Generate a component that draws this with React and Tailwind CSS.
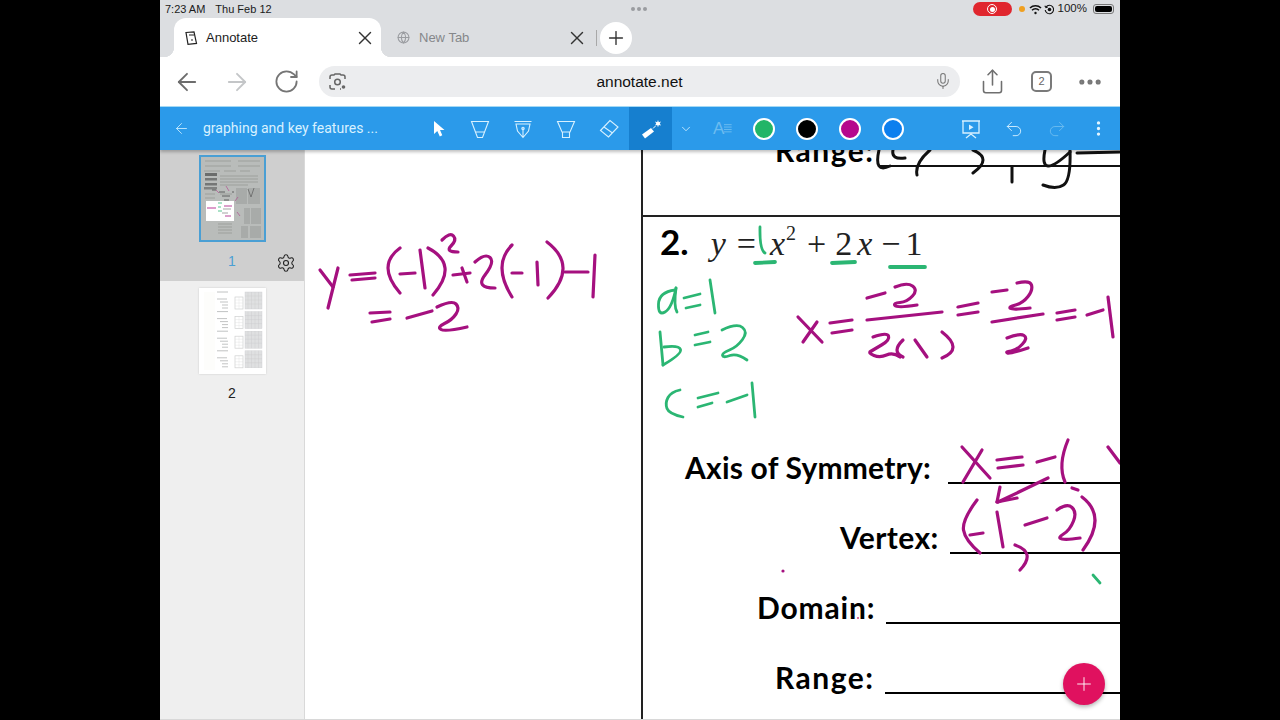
import React from "react";
import { ArrowLeft, ArrowRight, RotateCw, X, Plus, Globe, Mic, Share, MoreHorizontal, MoreVertical, ChevronDown, Settings, Undo2, Redo2 } from "lucide-react";

const M = "#a5107f";
const G = "#2bb673";

// smooth pen stroke through a list of [x, y] points
function smooth(p) {
  if (p.length < 3) return `M${p[0][0]} ${p[0][1]}L${p[1][0]} ${p[1][1]}`;
  if (p.length === 3) {
    const cx = 2 * p[1][0] - (p[0][0] + p[2][0]) / 2;
    const cy = 2 * p[1][1] - (p[0][1] + p[2][1]) / 2;
    return `M${p[0][0]} ${p[0][1]}Q${cx} ${cy} ${p[2][0]} ${p[2][1]}`;
  }
  let d = `M${p[0][0]} ${p[0][1]}`;
  for (let i = 1; i < p.length - 1; i++) {
    const mx = (p[i][0] + p[i + 1][0]) / 2;
    const my = (p[i][1] + p[i + 1][1]) / 2;
    d += `Q${p[i][0]} ${p[i][1]} ${i === p.length - 2 ? p[i + 1][0] : mx} ${i === p.length - 2 ? p[i + 1][1] : my}`;
  }
  return d;
}

function Ink({ color, w, strokes }) {
  return (
    <g fill="none" stroke={color} strokeWidth={w} strokeLinecap="round" strokeLinejoin="round">
      {strokes.map((s, i) => (
        <path key={i} d={smooth(s)} />
      ))}
    </g>
  );
}

const leftInk = [
  [[320, 270], [333, 287]],
  [[338, 268], [333, 288], [328, 308]],
  [[350, 275], [375, 273]],
  [[352, 280], [375, 278]],
  [[400, 248], [388, 268], [400, 293]],
  [[400, 274], [415, 273]],
  [[420, 250], [425, 288]],
  [[428, 248], [445, 268], [433, 295]],
  [[442, 240], [450, 232], [457, 240], [445, 252], [458, 252]],
  [[453, 275], [470, 273]],
  [[462, 268], [467, 282]],
  [[475, 262], [485, 253], [495, 262], [475, 288], [495, 288]],
  [[512, 245], [502, 268], [512, 297]],
  [[512, 273], [522, 273]],
  [[537, 262], [538, 285]],
  [[547, 242], [563, 268], [548, 298]],
  [[565, 272], [588, 272]],
  [[595, 255], [593, 297]],
  [[370, 313], [390, 312]],
  [[372, 322], [390, 319]],
  [[407, 318], [432, 311]],
  [[437, 307], [452, 300], [460, 308], [452, 320], [437, 327], [445, 332], [467, 327]],
];

const blackInk = [
  [[879, 150], [879, 166], [890, 166]],
  [[893, 150], [895, 157], [905, 158]],
  [[930, 150], [919, 163], [917, 175]],
  [[973, 150], [983, 160], [973, 173]],
  [[1012, 167], [1012, 182]],
  [[1045, 150], [1048, 166], [1070, 152]],
  [[1070, 150], [1071, 180], [1056, 190], [1043, 185]],
  [[1077, 153], [1120, 152]],
];

const greenThick = [
  [[755, 263], [775, 262]],
  [[832, 263], [855, 262]],
  [[890, 267], [925, 267]],
];

const greenInk = [
  [[760, 227], [761, 245], [765, 253]],
  [[675, 290], [659, 292], [658, 316], [672, 308], [676, 288]],
  [[676, 288], [675, 303], [677, 312]],
  [[684, 298], [700, 294]],
  [[686, 308], [700, 305]],
  [[710, 280], [715, 313]],
  [[660, 332], [663, 365]],
  [[663, 365], [682, 354], [679, 345], [664, 347]],
  [[695, 335], [708, 332]],
  [[695, 345], [710, 342]],
  [[722, 330], [737, 323], [748, 332], [737, 347], [722, 353], [723, 358], [737, 353], [747, 360]],
  [[680, 390], [671, 392], [665, 403], [669, 414], [683, 417]],
  [[698, 398], [718, 393]],
  [[698, 407], [712, 403]],
  [[727, 402], [747, 395]],
  [[752, 383], [755, 417]],
  [[1093, 575], [1100, 583]],
];

const magentaInk = [
  [[798, 317], [822, 342]],
  [[817, 322], [803, 342]],
  [[830, 323], [852, 320]],
  [[832, 333], [852, 330]],
  [[867, 298], [885, 293]],
  [[895, 287], [907, 282], [918, 290], [907, 302], [893, 303], [897, 308], [917, 305]],
  [[867, 320], [942, 312]],
  [[873, 337], [887, 332], [890, 340], [873, 350], [868, 353], [880, 358], [893, 352], [900, 357]],
  [[903, 340], [897, 350], [903, 357]],
  [[915, 340], [927, 357]],
  [[942, 332], [953, 347], [942, 358]],
  [[958, 307], [978, 303]],
  [[958, 315], [978, 312]],
  [[992, 292], [1007, 290]],
  [[1017, 283], [1030, 280], [1033, 290], [1023, 303], [1008, 307], [1013, 310], [1030, 308]],
  [[992, 322], [1043, 314]],
  [[1007, 338], [1020, 333], [1028, 338], [1017, 350], [1005, 352], [1010, 354], [1028, 348]],
  [[1057, 313], [1075, 310]],
  [[1057, 320], [1075, 317]],
  [[1087, 315], [1103, 310]],
  [[1108, 297], [1113, 337]],
  [[962, 447], [990, 478]],
  [[982, 450], [963, 482]],
  [[997, 460], [1022, 457]],
  [[998, 468], [1023, 465]],
  [[1037, 462], [1055, 457]],
  [[1068, 440], [1062, 463], [1065, 482]],
  [[1108, 447], [1120, 463]],
  [[1048, 478], [998, 502]],
  [[1000, 487], [997, 502]],
  [[997, 502], [1017, 498]],
  [[1072, 488], [1078, 490]],
  [[977, 500], [962, 520], [965, 540], [980, 553]],
  [[970, 535], [983, 533]],
  [[997, 512], [1003, 547]],
  [[1025, 525], [1047, 518]],
  [[1057, 510], [1067, 503], [1077, 512], [1070, 530], [1057, 538], [1067, 540], [1080, 538]],
  [[1082, 497], [1095, 520], [1083, 550]],
  [[1015, 545], [1027, 555], [1020, 570]],
];

function Swatch({ c }) {
  return <div className={"w-[22px] h-[22px] rounded-full border-2 border-white " + c} />;
}

function PenIcon({ children }) {
  return (
    <svg width="20" height="20" viewBox="0 0 20 20" fill="none" stroke="#d8f1ff" strokeWidth="1.1">
      {children}
    </svg>
  );
}

function Label({ text, rowClass, textClass, lineClass }) {
  return (
    <div className={"flex items-end font-bold text-[30px] leading-none text-black " + rowClass}>
      <span className={"whitespace-nowrap " + textClass}>{text}</span>
      <div className={"h-[2px] bg-black flex-1 min-w-[400px] " + lineClass} />
    </div>
  );
}

function Thumb1() {
  return (
    <div className="relative w-[67px] h-[87px] border-2 border-[#4a9fd4] bg-[#b9bcba] overflow-hidden">
      <svg width="63" height="83" viewBox="1 1 63 83">
        <g stroke="#8b8d8c" strokeWidth=".6" fill="none">
          <path d="M5 5h26M38 5h22M5 10h26M38 10h22M4 15h16M24 15h12M40 15h10" />
          <path d="M20 20h38M20 23h38M20 26h38M20 29h28" />
          <path d="M18 68h14M18 71h14M18 74h14M18 77h14" />
          <path d="M5 38h10M20 38h12M5 42h10" />
        </g>
        <rect x="5" y="17" width="12" height="3" fill="#6b6d6c" />
        <rect x="5" y="22" width="12" height="2.500" fill="#757776" />
        <rect x="5" y="27" width="12" height="2.500" fill="#757776" />
        <rect x="4" y="31" width="13" height="2.500" fill="#808281" />
        <g fill="#a8aba9">
          <rect x="36" y="32" width="11" height="16" />
          <rect x="48" y="32" width="12" height="16" />
          <rect x="44" y="52" width="6" height="16" />
          <rect x="51" y="52" width="10" height="16" />
          <rect x="41" y="70" width="7" height="12" />
          <rect x="50" y="70" width="11" height="12" />
        </g>
        <rect x="6" y="45" width="28" height="20" fill="#fff" />
        <path d="M7 52h9" stroke="#c75aa9" strokeWidth="1.200" />
        <path d="M18 47h4M18 51h3M18 55h4" stroke={G} strokeWidth=".8" />
        <path d="M24 50h8M25 60h6" stroke={M} strokeWidth=".8" />
        <path d="M23 53h8M22 57h6" stroke="#666" strokeWidth=".6" />
        <path d="M16 34l3 3M26 30l3 5M35 45l3-4M37 56l3 4" stroke="#b0508f" strokeWidth=".7" fill="none" />
        <path d="M48 33l3 8 3-9" stroke="#666" strokeWidth=".8" fill="none" />
        <path d="M12 34h4M19 36h6M22 40h8M24 44h5M32 36h2" stroke="#555" strokeWidth=".9" />
      </svg>
    </div>
  );
}

function Thumb2() {
  const rows = [0, 1, 2, 3];
  return (
    <div className="w-[67px] h-[86px] bg-white shadow-[0_0_2px_rgba(0,0,0,0.15)] overflow-hidden">
      <svg width="67" height="86" viewBox="0 0 67 86">
        <rect x="5" y="4" width="11" height="78" fill="#fdfdfb" />
        {rows.map((i) => (
          <g key={i} transform={`translate(0 ${i * 19.6})`}>
            <path d="M18 4h11" stroke="#b0b2b2" strokeWidth=".8" />
            <path d="M18 11h10M21 14h8M23 17h6M23 20h6" stroke="#a8aaaa" strokeWidth=".7" />
            <rect x="36" y="9" width="8" height="12" fill="none" stroke="#cfd0d0" strokeWidth=".7" />
            <path d="M40 9v12M36 12h8M36 15h8M36 18h8" stroke="#dedfdf" strokeWidth=".4" />
            <rect x="46" y="4" width="17" height="17" fill="#dfe0e1" stroke="#ccced0" strokeWidth=".4" />
            <path d="M49 4v17M52.500 4v17M56 4v17M59.500 4v17M46 8h17M46 12h17M46 16h17" stroke="#c9cacc" strokeWidth=".4" />
          </g>
        ))}
      </svg>
    </div>
  );
}

export default function App() {
  return (
    <div className="w-[1280px] h-[720px] bg-black flex justify-center overflow-hidden" style={{ fontFamily: '"Liberation Sans",sans-serif' }}>
      <div className="w-[960px] h-[720px] flex flex-col bg-white overflow-hidden">
        {/* status + tabs */}
        <div className="h-[57px] bg-[#dcdee1] flex flex-col shrink-0">
          <div className="h-[18px] relative flex items-center pl-[5px] pr-[6px] text-[11px] text-[#1a1a1a]">
            <span className="mr-[10px]">7:23 AM</span>
            <span>Thu Feb 12</span>
            <div className="absolute left-[471px] top-[7px] flex gap-[2px]">
              <i className="w-[4px] h-[4px] rounded-full bg-[#9a9ca0]" />
              <i className="w-[4px] h-[4px] rounded-full bg-[#9a9ca0]" />
              <i className="w-[4px] h-[4px] rounded-full bg-[#9a9ca0]" />
            </div>
            <div className="flex-1" />
            <div className="w-[39px] h-[14px] rounded-full bg-[#e0262e] flex items-center justify-center">
              <div className="w-[10px] h-[10px] rounded-full border border-white flex items-center justify-center">
                <div className="w-[5px] h-[5px] rounded-full bg-white" />
              </div>
            </div>
            <i className="ml-[7px] w-[6px] h-[6px] rounded-full bg-[#f0a020]" />
            <svg className="ml-[4px]" width="13" height="11" viewBox="0 0 13 11" fill="none" stroke="#111" strokeWidth="1.6">
              <path d="M1 4a8 8 0 0 1 11 0M3 6.300a5 5 0 0 1 7 0" />
              <circle cx="6.500" cy="9" r="1.200" fill="#111" stroke="none" />
            </svg>
            <svg className="ml-[2px]" width="11" height="11" viewBox="0 0 11 11" fill="none" stroke="#111" strokeWidth="1.100">
              <path d="M2 3a4.200 4.200 0 1 1-.8 3" />
              <path d="M.8 1.800 2 3.600l1.800-.6" />
              <circle cx="5.500" cy="5.500" r="1.800" fill="#111" stroke="none" />
            </svg>
            <span className="ml-[3px] text-[11.5px]">100%</span>
            <div className="ml-[6px] w-[21px] h-[10px] rounded-[3px] border border-[#777] p-[1px]">
              <div className="w-full h-full rounded-[2px] bg-black" />
            </div>
          </div>
          <div className="h-[39px] flex items-stretch pl-[14px]">
            <div className="relative w-[207px] bg-white rounded-t-[12px] flex items-center pl-[10px] pr-[5px] text-[13px] text-[#1c1c1c]">
              <div className="absolute left-[-10px] bottom-0 w-[10px] h-[10px] bg-[radial-gradient(circle_at_0_0,#dcdee1_10px,#fff_10.500px)]" />
              <div className="absolute right-[-10px] bottom-0 w-[10px] h-[10px] bg-[radial-gradient(circle_at_100%_0,#dcdee1_10px,#fff_10.500px)]" />
              <svg width="14" height="14" viewBox="0 0 14 14" fill="none" stroke="#222" strokeWidth="1.200">
                <path d="M2 1.500 10 .8l2.500 11.600-8.500.9z" />
                <path d="M5 4h5M7 9h2" />
              </svg>
              <span className="ml-[8px] flex-1">Annotate</span>
              <X size={22} strokeWidth={1.500} color="#333" />
            </div>
            <div className="w-[207px] flex items-center pl-[16px] text-[13px] text-[#85878a]">
              <Globe size={13} color="#9a9ca0" />
              <span className="ml-[9px] flex-1">New Tab</span>
              <X size={22} strokeWidth={1.500} color="#333" />
            </div>
            <div className="w-px h-[16px] bg-[#a8a8a8] self-center ml-[8px]" />
            <div className="ml-[3px] w-[32px] h-[32px] self-center rounded-full bg-white flex items-center justify-center">
              <Plus size={22} strokeWidth={1.500} color="#333" />
            </div>
          </div>
        </div>
        {/* address bar */}
        <div className="h-[50px] bg-white flex items-center shrink-0 pl-[13px] border-b border-[#a6dcf7]">
          <ArrowLeft size={28} strokeWidth={1.600} color="#6d6d6d" />
          <ArrowRight size={28} strokeWidth={1.600} color="#c4c6c8" className="ml-[22px]" />
          <RotateCw size={27} strokeWidth={1.600} color="#757575" className="ml-[22px]" />
          <div className="ml-[19px] w-[641px] h-[31px] rounded-full bg-[#ecedef] relative flex items-center justify-center text-[15.500px] text-[#111]">
            <svg className="absolute left-[10px] top-[7px]" width="18" height="18" viewBox="0 0 18 18" fill="none" stroke="#666" strokeWidth="1.500">
              <path d="M1 6V4a2 2 0 0 1 2-2h2l1-1h5l1 1h2a2 2 0 0 1 2 2v2M1 12v2a2 2 0 0 0 2 2h3M11 16h1" />
              <circle cx="8.500" cy="9" r="2.800" />
              <circle cx="14.500" cy="14" r="1.800" fill="#666" stroke="none" />
            </svg>
            annotate.net
            <Mic size={18} strokeWidth={1.400} color="#777" className="absolute right-[8px] top-[6px]" />
          </div>
          <Share size={27} strokeWidth={1.400} color="#6f6f6f" className="ml-[19px]" />
          <div className="ml-[25px] w-[21px] h-[21px] rounded-[5px] border-2 border-[#7a7a7a] text-[11px] text-[#666] flex items-center justify-center">2</div>
          <MoreHorizontal size={28} strokeWidth={2.400} color="#777" className="ml-[24px]" />
        </div>
        {/* toolbar */}
        <div className="h-[43px] bg-[#2b9aea] flex items-center shrink-0 shadow-[0_2px_3px_rgba(0,0,0,0.25)] relative z-10">
          <ArrowLeft size={17} strokeWidth={1.200} color="#cdeeff" className="ml-[13px]" />
          <span className="ml-[13px] w-[222px] text-[14px] text-[#d8f1ff]" style={{ fontFamily: "Roboto,sans-serif" }}>graphing and key features ...</span>
          <svg width="14" height="18" viewBox="0 0 14 18" className="ml-[7px]"><path d="M2 1v13l3.300-3 2.500 5.500 2.500-1.200L8 10h4.500z" fill="#fff" /></svg>
          <div className="ml-[24px] flex items-center gap-[23px]">
            <PenIcon><path d="M1.500 2.500h17L12.500 18.500h-5zM5.700 13h8.600" /></PenIcon>
            <PenIcon><path d="M1.500 2.500h17M3 5h14l-1.500 7L10 18.500 4.500 12zM10 9v9" /><circle cx="10" cy="9.500" r="1.200" /></PenIcon>
            <PenIcon><path d="M1.500 2.500h17L14 13H6zM6.500 13v5.500h7V13" /></PenIcon>
            <PenIcon><path d="M1.500 11.500 11 1.500l8 6.500-9.500 10zM5 8l8.500 6" /></PenIcon>
          </div>
          <div className="ml-[10px] w-[43px] h-full bg-[#167fcf] flex items-center justify-center">
            <svg width="22" height="22" viewBox="0 0 22 22" fill="#fff">
              <path d="M2 16.500 11 10l3 3.500-9 7z" />
              <path d="M13 10.500l2.500-2.500" stroke="#fff" strokeWidth="1" />
              <path d="M18 2l.8 2.200 2.200-.6-1.200 2 1.200 2-2.200-.6L18 9.200l-.8-2.200-2.200.6 1.200-2-1.200-2 2.200.6z" />
            </svg>
          </div>
          <ChevronDown size={14} strokeWidth={1.400} color="#d8f1ff" className="ml-[7px]" />
          <span className="ml-[20px] w-[19px] flex items-center text-[#6cbcf0]">
            <span className="text-[17px] leading-none">A</span>
            <svg width="8" height="11" viewBox="0 0 8 11" stroke="#6cbcf0" strokeWidth="1"><path d="M0 1.500h8M0 4h8M0 6.500h8M0 9h8" /></svg>
          </span>
          <div className="ml-[21px] flex items-center gap-[21px]">
            <Swatch c="bg-[#22b567]" />
            <Swatch c="bg-black" />
            <Swatch c="bg-[#b5088d]" />
            <Swatch c="bg-[#0c7fee]" />
          </div>
          <svg width="20" height="20" viewBox="0 0 20 20" fill="none" stroke="#d8f1ff" strokeWidth="1.300" className="ml-[57px]">
            <path d="M1 2h18M2 2v12h16V2M10 14v1M5 19l5-4 5 4" />
            <path d="M8 5.500v5.500l4.500-2.750z" fill="#d8f1ff" stroke="none" />
          </svg>
          <Undo2 size={20} strokeWidth={1.100} color="#d8f1ff" className="ml-[23px]" />
          <Redo2 size={20} strokeWidth={1.100} color="#6cbcf0" className="ml-[23px]" />
          <MoreVertical size={19} strokeWidth={2.200} color="#e4f5ff" className="ml-[22px]" />
        </div>
        {/* body */}
        <div className="flex-1 flex min-h-0 relative border-b border-[#d8d8d8]">
          <div className="w-[145px] bg-[#efefef] border-r border-[#d9d9d9] shrink-0">
            <div className="h-[131px] bg-[#cfcfcf] relative flex flex-col items-center pt-[5px]">
              <Thumb1 />
              <span className="mt-[11px] text-[14px] leading-[16px] text-[#4a9fd4]">1</span>
              <Settings size={20} strokeWidth={1.300} color="#222" className="absolute right-[8px] top-[103px]" />
            </div>
            <div className="flex flex-col items-center pt-[7px]">
              <Thumb2 />
              <span className="mt-[11px] text-[14px] leading-[16px] text-[#222]">2</span>
            </div>
          </div>
          {/* blank page */}
          <div className="w-[336px] bg-white relative shrink-0">
            <svg className="absolute left-0 top-0" width="336" height="200" viewBox="305 150 336 200">
              <Ink color={M} w="3.200" strokes={leftInk} />
            </svg>
          </div>
          {/* document */}
          <div className="flex-1 min-w-0 relative border-l-2 border-[#222] overflow-hidden bg-white" style={{ fontFamily: '"Lato","Liberation Sans",sans-serif' }}>
            <div className="h-[67px] border-b-2 border-[#222] relative">
              <div className="absolute left-[132px] top-[-15px] font-bold text-[30px] tracking-[1.500px] leading-none text-black">Range:</div>
            </div>
            <div className="pl-[17px] pt-[6px] flex items-baseline h-[201px]">
              <span className="font-bold text-[35px] leading-[36px] text-black">2.</span>
              <span className="ml-[22px] text-[34px] leading-[36px] text-[#222] whitespace-nowrap" style={{ fontFamily: '"Liberation Serif",serif' }}>
                <i>y</i>
                <span className="ml-[11px]">=</span>
                <i className="ml-[14px]">x</i>
                <sup className="text-[20px] top-[-0.75em] ml-[1px]">2</sup>
                <span className="ml-[11px]">+</span>
                <span className="ml-[9px]">2</span>
                <i className="ml-[5px]">x</i>
                <span className="ml-[9px]">−</span>
                <span className="ml-[5px]">1</span>
              </span>
            </div>
            <Label text="Axis of Symmetry:" rowClass="h-[66px] ml-[42px]" textClass="tracking-[0.200px] mb-[2px]" lineClass="ml-[17px]" />
            <Label text="Vertex:" rowClass="h-[70px] ml-[197px]" textClass="tracking-[0.400px] mb-[2px]" lineClass="ml-[11px]" />
            <Label text="Domain:" rowClass="h-[70px] ml-[114px]" textClass="tracking-[0.850px] mb-[2px]" lineClass="ml-[11px]" />
            <Label text="Range:" rowClass="h-[70px] ml-[132px]" textClass="tracking-[1.500px] mb-[2px]" lineClass="ml-[10px]" />
            <svg className="absolute left-[-2px] top-0" width="479" height="570" viewBox="641 150 479 570">
              <path d="M878 166h242" stroke="#111" strokeWidth="2" />
              <Ink color="#111" w="3" strokes={blackInk} />
              <Ink color={G} w="3.800" strokes={greenThick} />
              <Ink color={G} w="2.800" strokes={greenInk} />
              <Ink color={M} w="3.200" strokes={magentaInk} />
              <circle cx="783" cy="571" r="1.600" fill={M} />
              <circle cx="858" cy="618" r="1" fill="#d0407f" />
            </svg>
          </div>
          <div className="absolute left-[903px] top-[513px] w-[42px] h-[42px] rounded-full bg-[#e0115f] flex items-center justify-center shadow-[0_2px_4px_rgba(0,0,0,0.3)]">
            <Plus size={22} strokeWidth={1} color="#fff" />
          </div>
        </div>
      </div>
    </div>
  );
}
